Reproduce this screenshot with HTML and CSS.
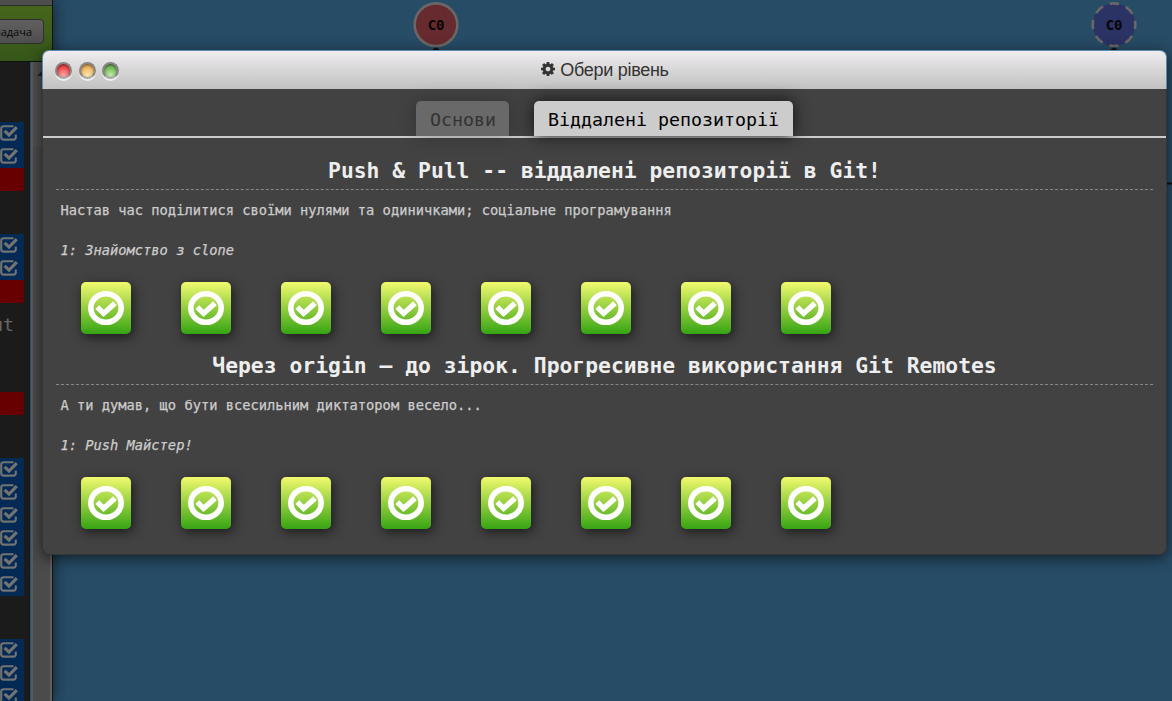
FILE: index.html
```html
<!DOCTYPE html>
<html lang="uk">
<head>
<meta charset="utf-8">
<title>Обери рівень</title>
<link rel="stylesheet" href="styles.css">
</head>
<body>
<svg class="defs" width="0" height="0" aria-hidden="true">
  <symbol id="box" viewBox="0 0 19 16">
    <path d="M13.5 1.2H3.6Q1.2 1.2 1.2 3.6v8.6q0 2.4 2.4 2.4h9.8q2.4 0 2.4-2.4V9.6" fill="none" stroke="currentColor" stroke-width="2.1"/>
    <path d="M4.6 5.8l4.4 4.300 7.800-7.900" fill="none" stroke="currentColor" stroke-width="3.200"/>
  </symbol>
  <symbol id="done" viewBox="0 0 50 52">
    <ellipse cx="25" cy="26" rx="15.200" ry="14.300" fill="none" stroke="#fff" stroke-width="5.600"/>
    <path d="M16.300 25.200l6.300 6.200 11.400-10.200" fill="none" stroke="#fff" stroke-width="5.400"/>
  </symbol>
</svg>

<div class="scene">
  <aside class="sidebar">
    <div class="strip"></div>
    <div class="toolbar"><span class="task">Задача</span></div>
    <div class="console">
      <div class="log">
        <div class="group">
          <div class="row"><svg><use href="#box"/></svg></div>
          <div class="row"><svg><use href="#box"/></svg></div>
          <div class="row red"></div>
        </div>
        <div class="group">
          <div class="row"><svg><use href="#box"/></svg></div>
          <div class="row"><svg><use href="#box"/></svg></div>
          <div class="row red"></div>
        </div>
        <div class="word"><span>ut</span></div>
        <div class="group">
          <div class="row red"></div>
        </div>
        <div class="group">
          <div class="row"><svg><use href="#box"/></svg></div>
          <div class="row"><svg><use href="#box"/></svg></div>
          <div class="row"><svg><use href="#box"/></svg></div>
          <div class="row"><svg><use href="#box"/></svg></div>
          <div class="row"><svg><use href="#box"/></svg></div>
          <div class="row"><svg><use href="#box"/></svg></div>
        </div>
        <div class="group">
          <div class="row"><svg><use href="#box"/></svg></div>
          <div class="row"><svg><use href="#box"/></svg></div>
          <div class="row"><svg><use href="#box"/></svg></div>
        </div>
      </div>
      <div class="scroll"><i class="up"></i><i class="thumb"></i></div>
    </div>
  </aside>
  <svg class="tree" width="1119" height="701" viewBox="53 0 1119 701">
    <path d="M431 51l5-4 5 4zM1109 51l5-4 5 4z" fill="#111"/>
    <path d="M1160 183.500H1172" stroke="#111" stroke-width="2"/>
    <circle cx="436" cy="24.700" r="21.300" fill="#672a2e" stroke="#6b6766" stroke-width="2.600"/>
    <circle cx="1114" cy="24.700" r="21.300" fill="#2b3264" stroke="#6b6766" stroke-width="2.600" stroke-dasharray="9.500 7.230" stroke-dashoffset="5"/>
    <text x="436" y="30" class="commit">C0</text>
    <text x="1114" y="30" class="commit">C0</text>
  </svg>
</div>

<main class="window">
  <header class="titlebar">
    <div class="lights"><i class="light close"></i><i class="light min"></i><i class="light max"></i></div>
    <h1 class="title">
      <svg class="cog" viewBox="128 128 1536 1536"><path fill="currentColor" d="M1152 896q0-106-75-181t-181-75-181 75-75 181 75 181 181 75 181-75 75-181zm512-109v222q0 12-8 23t-20 13l-185 28q-19 54-39 91 35 50 107 138 10 12 10 25t-9 23q-27 37-99 108t-94 71q-12 0-26-9l-138-108q-44 23-91 38-16 136-29 186-7 28-36 28h-222q-14 0-24.500-8.500t-11.500-21.500l-28-184q-49-16-90-37l-141 107q-10 9-25 9-14 0-25-11-126-114-165-168-7-10-7-23 0-12 8-23 15-21 51-66.500t54-70.500q-27-50-41-99l-183-27q-13-2-21-12.500t-8-23.500v-222q0-12 8-23t19-13l186-28q14-46 39-92-40-57-107-138-10-12-10-24 0-10 9-23 26-36 98.500-107.500t94.500-71.500q13 0 26 10l138 107q44-23 91-38 16-136 29-186 7-28 36-28h222q14 0 24.500 8.500t11.500 21.500l28 184q49 16 90 37l142-107q9-9 24-9 13 0 25 10 129 119 165 170 7 8 7 22 0 12-8 23-15 21-51 66.500t-54 70.500q26 50 41 98l183 28q13 2 21 12.500t8 23.500z"/></svg>
      <span>Обери рівень</span>
    </h1>
  </header>
  <nav class="tabs">
    <div class="tab">Основи</div>
    <div class="tab active">Віддалені репозиторії</div>
  </nav>
  <section class="series">
    <h2>Push &amp; Pull -- віддалені репозиторії в Git!</h2>
    <p class="about">Настав час поділитися своїми нулями та одиничками; соціальне програмування</p>
    <p class="level">1: Знайомство з clone</p>
    <div class="icons">
      <svg><use href="#done"/></svg><svg><use href="#done"/></svg><svg><use href="#done"/></svg><svg><use href="#done"/></svg><svg><use href="#done"/></svg><svg><use href="#done"/></svg><svg><use href="#done"/></svg><svg><use href="#done"/></svg>
    </div>
  </section>
  <section class="series">
    <h2>Через origin – до зірок. Прогресивне використання Git Remotes</h2>
    <p class="about">А ти думав, що бути всесильним диктатором весело...</p>
    <p class="level">1: Push Майстер!</p>
    <div class="icons">
      <svg><use href="#done"/></svg><svg><use href="#done"/></svg><svg><use href="#done"/></svg><svg><use href="#done"/></svg><svg><use href="#done"/></svg><svg><use href="#done"/></svg><svg><use href="#done"/></svg><svg><use href="#done"/></svg>
    </div>
  </section>
</main>
</body>
</html>
```
FILE: styles.css
```css
* { box-sizing: border-box; }
body {
  margin: 0;
  width: 1172px;
  height: 701px;
  overflow: hidden;
  position: relative;
  background: #274c66;
  font-family: "DejaVu Sans Mono", monospace;
}
.defs { position: absolute; }
h1, h2, p { margin: 0; font-weight: normal; }

.scene { display: flex; height: 701px; }
.sidebar {
  flex: none;
  width: 53px;
  height: 701px;
  display: flex;
  flex-direction: column;
  border-right: 1px solid #151515;
  box-shadow: 0 0 14px rgba(0, 0, 0, .6);
}
.strip { flex: none; height: 6px; background: #4d4d4d; border-bottom: 1px solid #2c2c2c; }
.toolbar {
  flex: none;
  height: 56px;
  padding-top: 13px;
  background: linear-gradient(#46651a, #36571a);
  border-bottom: 1px solid #111;
  overflow: hidden;
}
.task {
  display: flex;
  align-items: center;
  justify-content: flex-end;
  width: 64px;
  height: 25px;
  margin-left: -20px;
  padding-right: 11px;
  border: 1px solid #303030;
  border-radius: 4px;
  background: linear-gradient(#606060, #4e4e4e);
  color: #080808;
  font: 11px "Open Sans", sans-serif;
}
.console { flex: 1; min-height: 0; display: flex; }
.log {
  width: 31px;
  padding-top: 60px;
  background: #1b1b1b;
  border-right: 1px solid #205273;
  overflow: hidden;
}
.group { width: 24px; margin-bottom: 43px; }
.row { height: 23px; background: #022a55; }
.row.red { background: #670000; }
.row svg { display: block; width: 19px; height: 16px; color: #737373; transform: translateY(3px); }
.word {
  display: flex;
  justify-content: flex-end;
  width: 14px;
  height: 46px;
  margin: -43px 0 43px;
  color: #666;
  font-size: 18.3px;
  line-height: 44px;
}
.scroll {
  flex: 1;
  background: #505050;
  border-left: 2px solid #5b5b5b;
  border-right: 2px solid #606060;
  display: flex;
  flex-direction: column;
}
.up {
  margin: 8px 0 0 4px;
  width: 0;
  border: 6px solid transparent;
  border-top: 0;
  border-bottom: 6px solid #222;
}
.thumb { flex: 1; margin-top: 71px; background: #4b4b4b; }

.tree { flex: none; display: block; }
.commit { font-size: 14px; font-weight: bold; text-anchor: middle; fill: #060606; letter-spacing: -.3px; }

.window {
  position: absolute;
  z-index: 2;
  left: 42px;
  top: 50px;
  width: 1125px;
  height: 505px;
  border: 1px solid #353535;
  border-top: 0;
  border-radius: 8px;
  background: #424242;
  box-shadow: 0 3px 15px rgba(0, 0, 0, .6);
}
.titlebar {
  height: 39px;
  margin: 0 -1px;
  padding-left: 12px;
  display: flex;
  align-items: center;
  border: 1px solid #5d8bae;
  border-bottom: 0;
  border-radius: 7px 7px 0 0;
  background: linear-gradient(#efedef, #c1c1c1);
}
.lights { display: flex; gap: 6.500px; width: 70px; }
.light {
  width: 17px;
  height: 17px;
  border-radius: 50%;
  border: 2px solid #8b8585;
  border-bottom-color: #aaa;
  box-shadow: 0 2px 0 #f1f1f1, inset 0 1px 2px rgba(0, 0, 0, .5);
}
.close { background: radial-gradient(circle at 50% 85%, #ffaaa5, #ee4d52 55%, #c62e38); }
.min { background: radial-gradient(circle at 50% 85%, #ffe7ae, #efb966 55%, #c58b3c); }
.max { background: radial-gradient(circle at 50% 85%, #c1eda6, #79bb61 55%, #488c40); }
.title {
  flex: 1;
  display: flex;
  align-items: center;
  justify-content: center;
  gap: 5px;
  padding-right: 81px;
  color: #333;
  font: 18px "Liberation Sans", Arial, sans-serif;
}
.title span { letter-spacing: -.3px; }
.cog { width: 14px; height: 14px; margin-top: -2px; }

.tabs {
  height: 49px;
  padding-top: 12px;
  display: flex;
  justify-content: center;
  gap: 25px;
  border-bottom: 2px solid #ccc;
}
.tab {
  height: 35px;
  padding: 0 13.500px;
  border-radius: 5px 5px 0 0;
  background: #696969;
  color: #333;
  font-size: 18.3px;
  line-height: 37px;
  white-space: pre;
  box-shadow: 0 0 18px rgba(0, 0, 0, .25);
}
.tab.active { background: #ccc; color: #000; box-shadow: 0 0 16px #111; }

.series { height: 195px; padding: 0 13px; color: #ccc; }
.series h2 {
  height: 52px;
  padding-top: 14px;
  border-bottom: 1px dashed #888;
  color: #eee;
  font-size: 21.370px;
  font-weight: bold;
  line-height: 38px;
  text-align: center;
  white-space: pre;
}
.about, .level {
  height: 40px;
  padding-left: 4.500px;
  font-size: 13.720px;
  line-height: 41px;
  white-space: pre;
  -webkit-text-stroke: .25px #ccc;
}
.level { font-style: italic; }
.icons { display: flex; gap: 50px; padding: 12px 0 0 25px; }
.icons svg {
  width: 50px;
  height: 52px;
  border-radius: 5px;
  background: linear-gradient(#f2fa6e, #36a413);
  box-shadow: 2px 3px 12px rgba(0, 0, 0, .6);
}
```
